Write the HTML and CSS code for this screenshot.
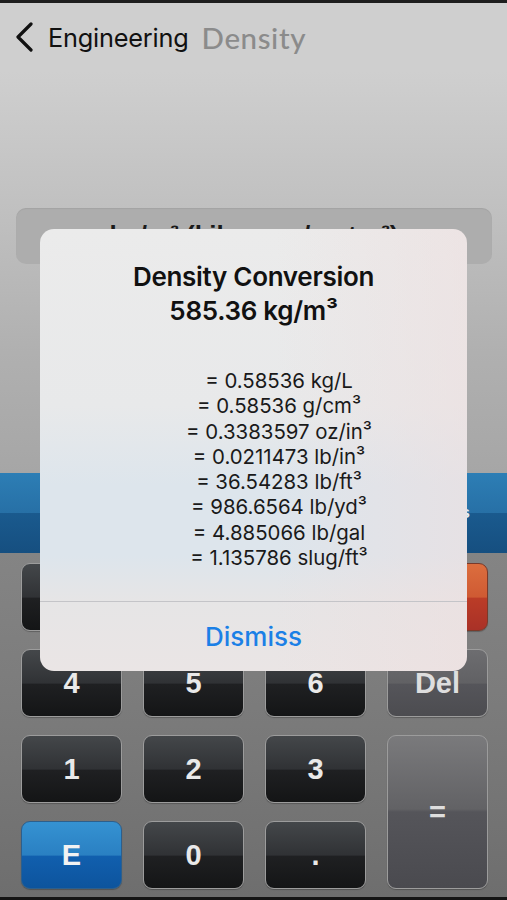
FILE: index.html
```html
<!DOCTYPE html>
<html lang="en">
<head>
<meta charset="utf-8">
<title>Density</title>
<link rel="stylesheet" href="styles.css">
</head>
<body>
<div class="screen">
  <div class="topline"></div>
  <header class="nav">
    <svg class="chev" width="20" height="30" viewBox="0 0 20 30"><polyline points="17,2 4,15 17,28" fill="none" stroke="#111" stroke-width="3.2" stroke-linecap="round" stroke-linejoin="round"/></svg>
    <span class="back-label">Engineering</span>
    <span class="title">Density</span>
  </header>
  <section class="display">
    <div class="unit-box"><span>kg/m³ (kilogram/meter³)</span></div>
  </section>
  <div class="bluebar"><span class="bar-label">Units</span></div>
  <section class="keypad">
    <div class="key dark"></div>
    <div class="key dark"></div>
    <div class="key dark"></div>
    <div class="key orange"></div>
    <div class="key dark">4</div>
    <div class="key dark">5</div>
    <div class="key dark">6</div>
    <div class="key gray">Del</div>
    <div class="key dark">1</div>
    <div class="key dark">2</div>
    <div class="key dark">3</div>
    <div class="key gray equals">=</div>
    <div class="key blue">E</div>
    <div class="key dark">0</div>
    <div class="key dark">.</div>
  </section>
  <div class="bottomline"></div>

  <div class="alert">
    <div class="alert-body">
      <div class="alert-title">Density Conversion</div>
      <div class="alert-title">585.36 kg/m³</div>
      <div class="alert-list">
        <div>= 0.58536 kg/L</div>
        <div>= 0.58536 g/cm³</div>
        <div>= 0.3383597 oz/in³</div>
        <div>= 0.0211473 lb/in³</div>
        <div>= 36.54283 lb/ft³</div>
        <div>= 986.6564 lb/yd³</div>
        <div>= 4.885066 lb/gal</div>
        <div>= 1.135786 slug/ft³</div>
      </div>
    </div>
    <div class="alert-action">Dismiss</div>
  </div>
</div>
</body>
</html>
```

FILE: styles.css
```css
* { box-sizing: border-box; }
html, body { margin: 0; padding: 0; background: #111; }
body { width: 507px; height: 900px; overflow: hidden; }

.screen {
  position: relative;
  width: 507px;
  height: 900px;
  display: flex;
  flex-direction: column;
  font-family: "Inter", "Liberation Sans", sans-serif;
}

.topline { height: 3px; background: #1e1e1e; flex: none; }

.nav {
  flex: none;
  height: 68px;
  display: flex;
  align-items: center;
  padding-left: 14px;
  background: #cfcfcf;
}
.chev { flex: none; margin-right: 14px; }
.back-label {
  font-size: 25.3px;
  color: #111;
  letter-spacing: -0.2px;
}
.title {
  margin-left: 13px;
  font-family: "Lato", sans-serif;
  font-size: 29.5px;
  font-weight: 500;
  color: #8b8b8b;
  letter-spacing: 0.6px;
}

.display {
  flex: none;
  height: 402px;
  background: linear-gradient(180deg, #cfcfcf 0%, #c0c0c0 35%, #b0b0b0 70%, #a6a6a6 100%);
  padding: 137px 15px 0 16px;
}
.unit-box {
  height: 56px;
  border-radius: 10px;
  background: #adadad;
  box-shadow: inset 0 1px 1px rgba(0,0,0,0.06);
  display: flex;
  justify-content: center;
  padding-top: 12px;
}
.unit-box span {
  font-family: "Liberation Sans", sans-serif;
  font-weight: 700;
  font-size: 26px;
  line-height: 30px;
  color: #1a1a1a;
}

.bluebar {
  flex: none;
  height: 80px;
  background: linear-gradient(180deg, #2d7eb5 0%, #2770a6 50%, #1a5a8e 50%, #164f80 100%);
  display: flex;
  align-items: center;
  justify-content: flex-end;
  padding-right: 37px;
}
.bar-label {
  font-family: "Liberation Sans", sans-serif;
  font-weight: 700;
  font-size: 17px;
  color: #e6eef5;
}

.keypad {
  flex: none;
  height: 344px;
  background: linear-gradient(180deg, #848484 0%, #7a7a7a 50%, #6e6e6e 100%);
  padding: 10px 20px 8px 21px;
  display: grid;
  grid-template-columns: repeat(4, 101px);
  grid-template-rows: repeat(4, 68px);
  column-gap: 21px;
  row-gap: 18px;
}
.key {
  border-radius: 9px;
  border: 1.5px solid #9c9c9c;
  display: flex;
  align-items: center;
  justify-content: center;
  font-family: "Liberation Sans", sans-serif;
  font-weight: 700;
  font-size: 29px;
  color: #e9e9e9;
  box-shadow: 0 1px 1px rgba(0,0,0,0.25);
}
.key.dark {
  background: linear-gradient(180deg, #44474a 0%, #303235 50%, #1f2022 52%, #141516 100%);
}
.key.orange {
  border-color: #7a3a2a;
  background: linear-gradient(180deg, #dc6e3e 0%, #cf5a33 50%, #bb3c27 52%, #a93127 100%);
}
.key.gray {
  background: linear-gradient(180deg, #6d6d70 0%, #616164 50%, #55555a 52%, #4c4c50 100%);
  color: #dedede;
}
.key.equals {
  grid-row: 3 / span 2;
  grid-column: 4;
  background: linear-gradient(180deg, #7a7a7c 0%, #626265 48%, #55555a 50%, #4a4a4f 100%);
}
.key.blue {
  border-color: #2d5f8c;
  background: linear-gradient(180deg, #3592d2 0%, #2a80c2 50%, #115fae 52%, #0d549d 100%);
  color: #f2f2f2;
}

.bottomline { flex: 1; background: #151515; }

.alert {
  position: absolute;
  left: 40px;
  top: 229px;
  width: 427px;
  height: 442px;
  border-radius: 14px;
  overflow: hidden;
  display: flex;
  flex-direction: column;
  background:
    linear-gradient(90deg, rgba(236,226,226,0) 55%, rgba(238,222,222,0.55) 100%),
    linear-gradient(180deg, #ebebeb 0%, #e8e9ea 40%, #dde5ec 58%, #dde5ec 74%, #e6e5e6 84%, #eae5e5 100%);
}
.alert-body {
  flex: none;
  height: 373px;
  padding-top: 31px;
  text-align: center;
  color: #111;
  border-bottom: 1px solid #c4c4c8;
}
.alert-title {
  font-size: 26px;
  font-weight: 600;
  line-height: 34px;
  letter-spacing: -0.3px;
}
.alert-list {
  margin-top: 40px;
  padding-left: 51px;
  font-size: 20.4px;
  line-height: 25.3px;
  color: #1a1a1a;
}
.alert-action {
  flex: 1;
  display: flex;
  align-items: center;
  justify-content: center;
  font-size: 26px;
  font-weight: 500;
  color: #1b80e6;
}
```
